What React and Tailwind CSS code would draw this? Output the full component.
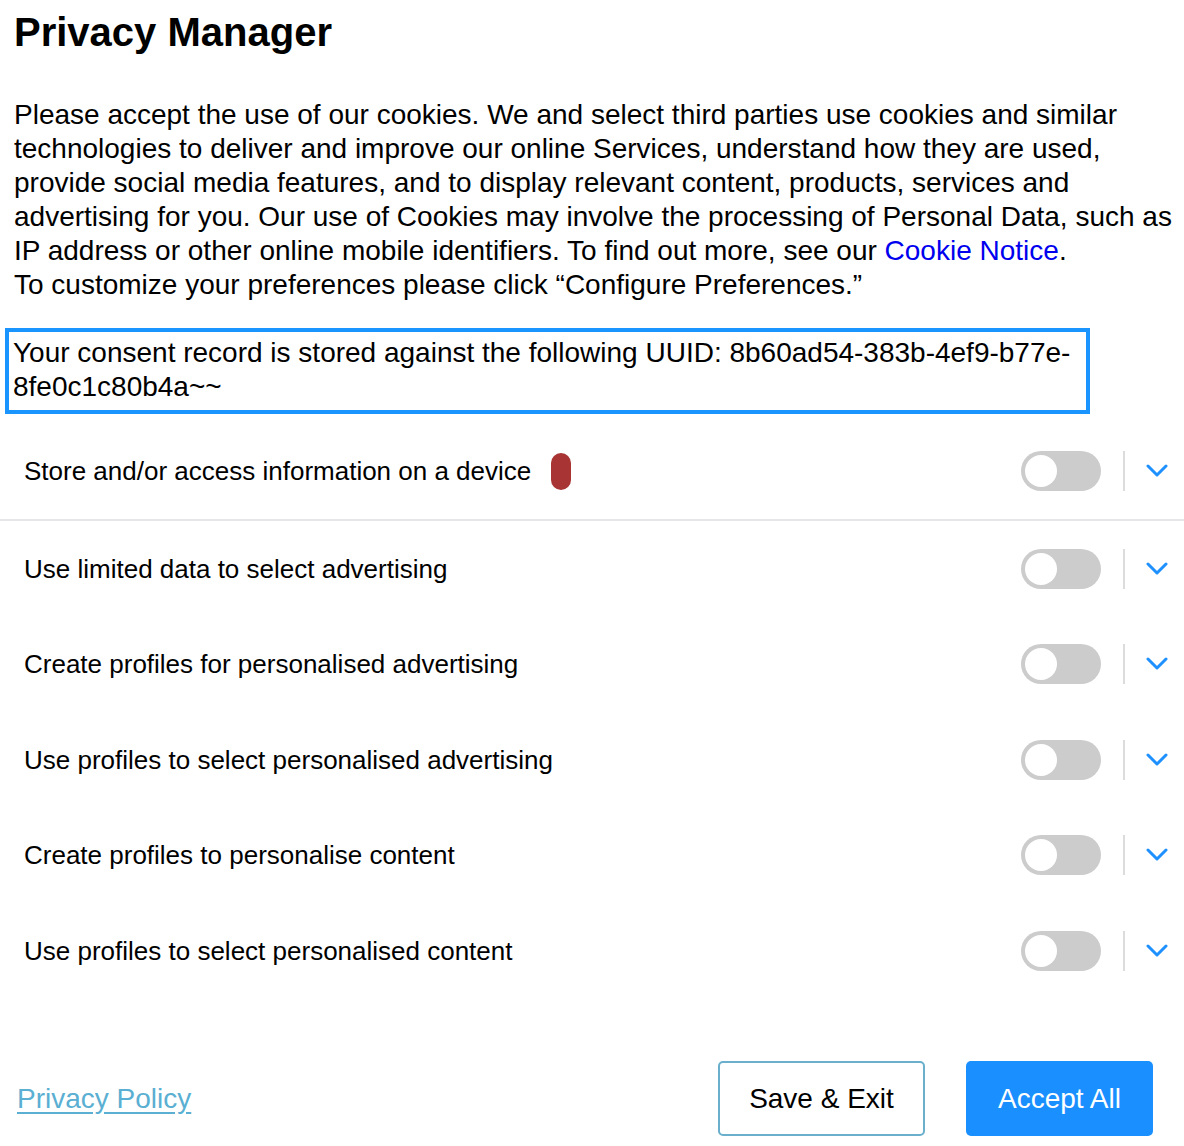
import React from 'react'

const purposes = [
  { label: 'Store and/or access information on a device', flag: true },
  { label: 'Use limited data to select advertising' },
  { label: 'Create profiles for personalised advertising' },
  { label: 'Use profiles to select personalised advertising' },
  { label: 'Create profiles to personalise content' },
  { label: 'Use profiles to select personalised content' },
]

function Toggle() {
  return (
    <div className="w-[80px] h-[40px] rounded-full bg-[#cccccc] flex items-center px-[4px]">
      <span className="w-[32px] h-[32px] rounded-full bg-white" />
    </div>
  )
}

function Chevron() {
  return (
    <svg width="22" height="14" viewBox="0 0 22 14" fill="none">
      <polyline points="2,2 11,11 20,2" stroke="#1e90ff" strokeWidth="3" strokeLinecap="round" strokeLinejoin="round" />
    </svg>
  )
}

function PurposeRow({ label, flag, divider }) {
  return (
    <div className={`flex items-center pl-[24px] pr-[16px] ${divider ? 'h-[98px] border-b-2 border-[#e6e6ea]' : 'h-[95.5px]'}`}>
      <span className="text-[26px] leading-[34px] text-black">{label}</span>
      {flag && <span className="ml-[20px] w-[20px] h-[37px] rounded-full bg-[#a83434]" />}
      <div className="ml-auto flex items-center">
        <Toggle />
        <span className="ml-[22px] w-[2px] h-[40px] bg-[#dcdcdc]" />
        <span className="ml-[21px] flex items-center"><Chevron /></span>
      </div>
    </div>
  )
}

export default function App() {
  return (
    <div className="w-[1184px] h-[1146px] bg-white text-black font-['Liberation_Sans',Arial,sans-serif] flex flex-col">
      <h1 className="pl-[14px] pt-[8px] text-[40px] leading-[48px] font-bold">Privacy Manager</h1>
      <p className="pl-[14px] pr-[10px] mt-[42px] text-[28px] leading-[34px]">
        Please accept the use of our cookies. We and select third parties use cookies and similar technologies to deliver and improve our online Services, understand how they are used, provide social media features, and to display relevant content, products, services and advertising for you. Our use of Cookies may involve the processing of Personal Data, such as IP address or other online mobile identifiers. To find out more, see our{' '}
        <a className="text-[#0000ee]">Cookie Notice</a>.
        <br />
        To customize your preferences please click “Configure Preferences.”
      </p>
      <div className="ml-[5px] mt-[26px] w-[1085px] border-4 border-[#1a94ff] pl-[4px] pr-[14px] pt-[4px] pb-[6px] text-[28px] leading-[34px]">
        Your consent record is stored against the following UUID: 8b60ad54-383b-4ef9-b77e-8fe0c1c80b4a~~
      </div>
      <div className="mt-[9px]">
        {purposes.map((p, i) => (
          <PurposeRow key={p.label} label={p.label} flag={p.flag} divider={i === 0} />
        ))}
      </div>
      <div className="mt-auto mb-[10px] flex items-center pl-[17px] pr-[31px]">
        <a className="text-[28px] leading-[34px] text-[#5aafd2] underline underline-offset-[4px]">Privacy Policy</a>
        <button className="ml-auto w-[207px] h-[75px] rounded-[5px] border-2 border-[#6ab0cc] bg-white text-[28px] text-black">
          Save &amp; Exit
        </button>
        <button className="ml-[41px] w-[187px] h-[75px] rounded-[5px] bg-[#1a8fff] text-[28px] text-white">
          Accept All
        </button>
      </div>
    </div>
  )
}
